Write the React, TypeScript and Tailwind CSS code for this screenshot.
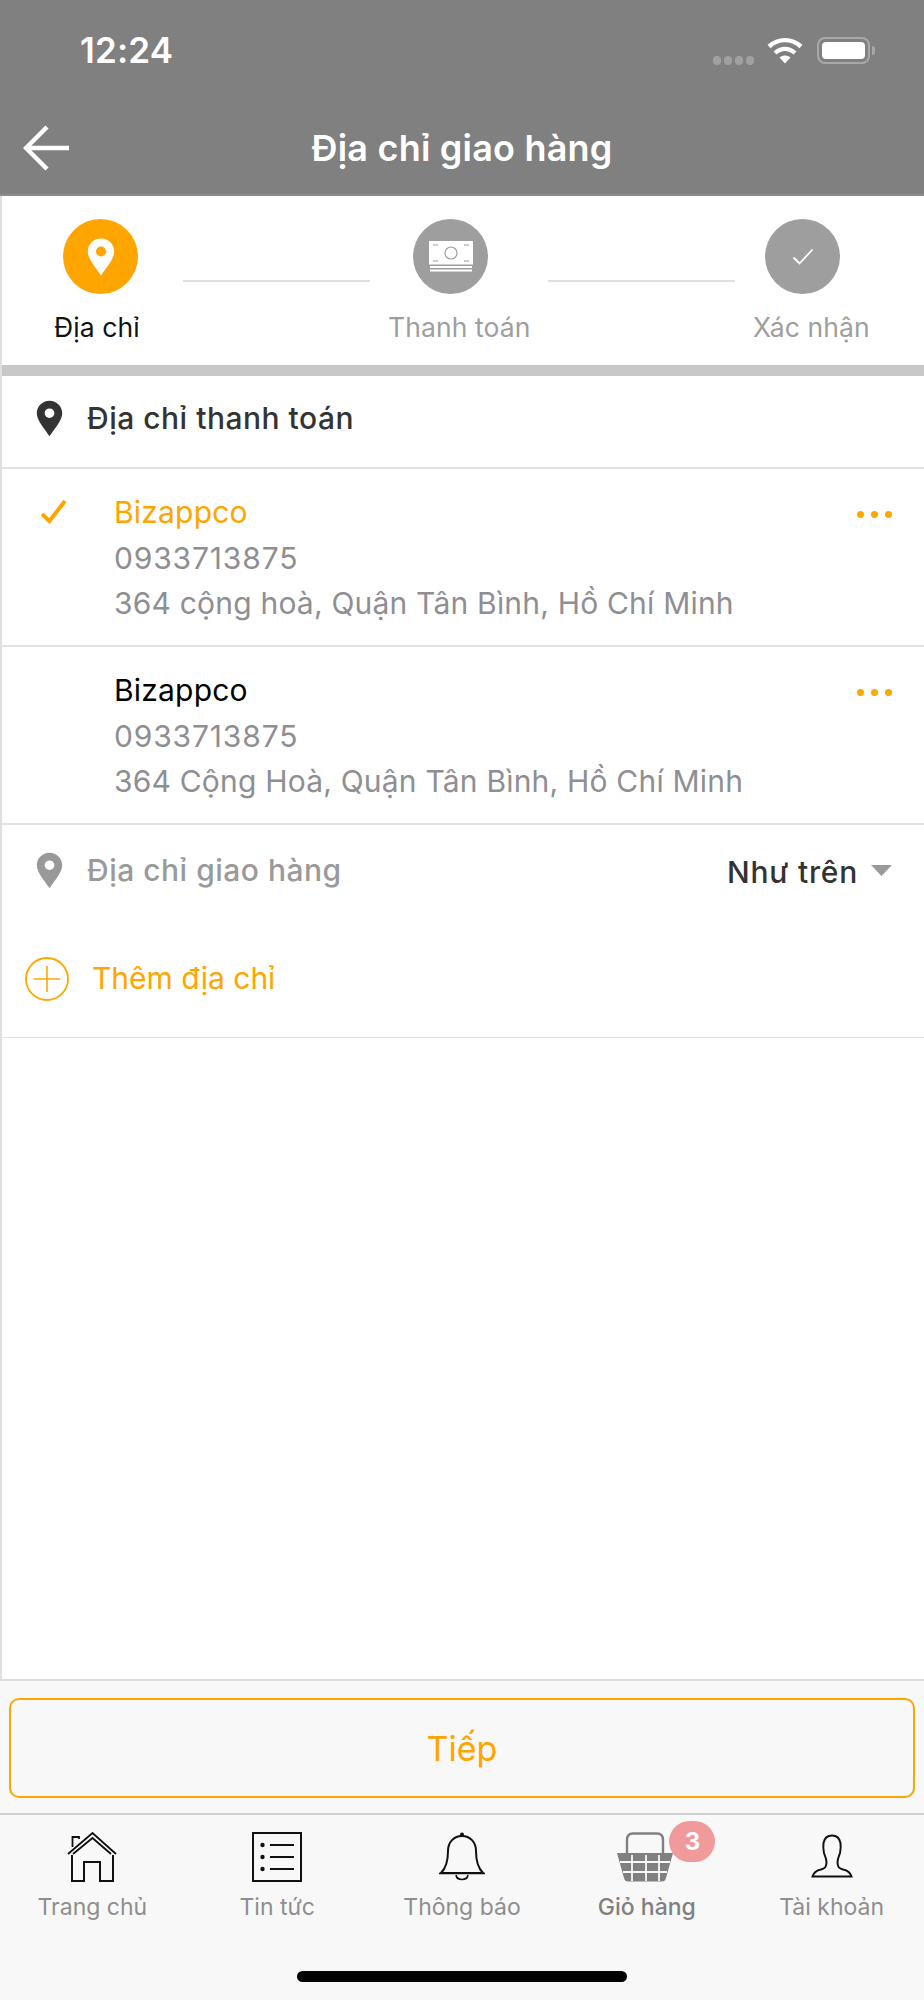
const font = { fontFamily: '"Inter", "Liberation Sans", sans-serif' };

function Pin({ fill, hole, className }: { fill: string; hole: string; className: string }) {
  return (
    <svg viewBox="0 0 28 38" className={className}>
      <path d="M14 0.5C6.5 0.5 0.8 6.3 0.8 13.6 0.8 21 9.5 30.5 14 37.5 18.5 30.5 27.2 21 27.2 13.6 27.2 6.3 21.5 0.5 14 0.5Z" fill={fill} />
      <circle cx="14" cy="13.5" r="5" fill={hole} />
    </svg>
  );
}

function Dots() {
  return (
    <div className="flex gap-[7px] mr-[32px] mt-[21px]">
      <span className="w-[7px] h-[7px] rounded-full bg-[#ffa500]" />
      <span className="w-[7px] h-[7px] rounded-full bg-[#ffa500]" />
      <span className="w-[7px] h-[7px] rounded-full bg-[#ffa500]" />
    </div>
  );
}

function Address({ name, nameColor, address, checked }: { name: string; nameColor: string; address: string; checked?: boolean }) {
  return (
    <div className="flex items-start h-[178px] shrink-0 pt-[21px] border-b-2 border-[#e2e2e2]">
      <div className="w-[112px] shrink-0 pl-[38px] pt-[9px]">
        {checked && (
          <svg viewBox="0 0 28 26" className="w-[28px] h-[26px]">
            <path d="M2 15 L9.5 22 L25 2" fill="none" stroke="#ffa500" strokeWidth="4" />
          </svg>
        )}
      </div>
      <div className="flex-1 text-[30px] leading-[44px] tracking-[0.2px]">
        <div className={`${nameColor} h-[46px]`}>{name}</div>
        <div className="text-[#8e8e93] h-[45px] tracking-[0.85px]">0933713875</div>
        <div className="text-[#8e8e93] h-[44px]">{address}</div>
      </div>
      <Dots />
    </div>
  );
}

function Tab({ label, children, strong }: { label: string; children: React.ReactNode; strong?: boolean }) {
  return (
    <div className="flex-1 flex flex-col items-center relative">
      <div className="h-[50px] flex items-center justify-center">{children}</div>
      <div className={`mt-[11px] text-[23px] leading-[28px] ${strong ? 'text-[#808080] font-medium' : 'text-[#8e8e8e]'}`}>{label}</div>
    </div>
  );
}

export default function App() {
  return (
    <div style={font} className="w-[924px] h-[2000px] flex flex-col bg-white overflow-hidden">
      <header className="h-[196px] shrink-0 bg-[#808080] border-b-2 border-[#8c8c8c] flex flex-col text-white">
        <div className="flex items-center h-[50px] mt-[25px] pl-[80px] pr-[49px]">
          <div className="text-[35px] font-semibold leading-[50px] tracking-[0.2px]">12:24</div>
          <div className="flex gap-[3px] ml-auto mt-[20px]">
            <span className="w-[8px] h-[9px] rounded-full bg-[#a0a0a0]" />
            <span className="w-[8px] h-[9px] rounded-full bg-[#a0a0a0]" />
            <span className="w-[8px] h-[9px] rounded-full bg-[#a0a0a0]" />
            <span className="w-[8px] h-[9px] rounded-full bg-[#a0a0a0]" />
          </div>
          <svg viewBox="0 0 36 27" className="w-[36px] h-[27px] ml-[13px]">
            <path d="M2 9.5C11.5 1 24.5 1 34 9.5" fill="none" stroke="#fff" strokeWidth="4.4" />
            <path d="M8 16C14 10.5 22 10.5 28 16" fill="none" stroke="#fff" strokeWidth="4.4" />
            <path d="M12.5 20.5C15.5 17.8 20.5 17.8 23.5 20.5L18 26.5Z" fill="#fff" />
          </svg>
          <div className="ml-[14px] w-[53px] h-[27px] rounded-[8px] border-[2px] border-[#a8a8a8] p-[3px]">
            <div className="w-full h-full bg-white rounded-[4px]" />
          </div>
          <div className="w-[3px] h-[9px] bg-[#a8a8a8] rounded-r-full ml-[2px]" />
        </div>
        <div className="relative flex items-center justify-center h-[60px] mt-[43px]">
          <svg viewBox="0 0 48 46" className="absolute left-[23px] top-[7px] w-[48px] h-[46px]">
            <path d="M46 23H3M24 2L3 23L24 44" fill="none" stroke="#fff" strokeWidth="4.4" />
          </svg>
          <h1 className="text-[36px] font-semibold tracking-[0.2px]">Địa chỉ giao hàng</h1>
        </div>
      </header>

      <main className="flex-1 border-l-2 border-[#dfdfdf] flex flex-col min-h-0">
        <div className="h-[169px] shrink-0 pt-[23px]">
          <div className="flex items-start pl-[61px]">
            <div className="w-[75px] h-[75px] rounded-full bg-[#ffa500] flex items-center justify-center">
              <Pin fill="#fff" hole="#ffa500" className="w-[28px] h-[40px]" />
            </div>
            <div className="w-[187px] h-[2px] bg-[#e0e0e0] mt-[61px] ml-[45px]" />
            <div className="ml-[43px] w-[75px] h-[75px] rounded-full bg-[#9e9e9e] flex items-center justify-center">
              <svg viewBox="0 0 44 32" className="w-[44px] h-[32px]">
                <rect x="0" y="0" width="44" height="23.5" fill="#fff" />
                <circle cx="22" cy="12" r="6" fill="none" stroke="#9e9e9e" strokeWidth="1.2" />
                <path d="M4 4H9M35 4H40M4 20H9M35 20H40" stroke="#9e9e9e" strokeWidth="1.2" />
                <rect x="1" y="25" width="42" height="2" fill="#fff" />
                <rect x="1" y="28.5" width="42" height="2" fill="#fff" />
              </svg>
            </div>
            <div className="w-[187px] h-[2px] bg-[#e0e0e0] mt-[61px] ml-[60px]" />
            <div className="ml-[30px] w-[75px] h-[75px] rounded-full bg-[#9e9e9e] flex items-center justify-center">
              <svg viewBox="0 0 22 18" className="w-[22px] h-[18px]">
                <path d="M1.5 9.5L7.5 15.5L20.5 1.5" fill="none" stroke="#fff" strokeWidth="1.8" />
              </svg>
            </div>
          </div>
          <div className="h-[30px] mt-[18px] text-[26.5px] leading-[30px] tracking-[0.1px]">
            <div className="flex">
              <span className="ml-[52px] w-[334px] text-[#111]">Địa chỉ</span>
              <span className="w-[365px] text-[#9e9e9e]">Thanh toán</span>
              <span className="text-[#9e9e9e]">Xác nhận</span>
            </div>
          </div>
        </div>
        <div className="h-[11px] shrink-0 bg-[#c8c8c8]" />
        <div className="h-[93px] shrink-0 flex items-center border-b-2 border-[#e2e2e2] pl-[34px] pb-[6px]">
          <Pin fill="#333" hole="#fff" className="w-[27px] h-[37px]" />
          <span className="ml-[24px] text-[30px] font-medium text-[#333] tracking-[0.5px]">Địa chỉ thanh toán</span>
        </div>
        <Address name="Bizappco" nameColor="text-[#ffa500]" address="364 cộng hoà, Quận Tân Bình, Hồ Chí Minh" checked />
        <Address name="Bizappco" nameColor="text-black" address="364 Cộng Hoà, Quận Tân Bình, Hồ Chí Minh" />
        <div className="h-[90px] shrink-0 flex items-center pl-[34px] pr-[32px]">
          <Pin fill="#999" hole="#fff" className="w-[27px] h-[37px]" />
          <span className="ml-[24px] text-[30px] font-medium text-[#9a9a9a] tracking-[0.5px] mt-[1px]">Địa chỉ giao hàng</span>
          <span className="ml-auto text-[30px] font-medium text-[#333] tracking-[0.8px] mt-[4px]">Như trên</span>
          <svg viewBox="0 0 21 11" className="w-[21px] h-[11px] ml-[13px]"><path d="M0 0H21L10.500 11Z" fill="#999" /></svg>
        </div>
        <div className="flex-1 min-h-0">
          <div className="h-[123px] border-b border-[#e2e2e2] flex items-center pl-[23px] pt-[5px]">
            <svg viewBox="0 0 44 44" className="w-[44px] h-[44px]">
              <circle cx="22" cy="22" r="21" fill="none" stroke="#ffa500" strokeWidth="1.8" />
              <path d="M22 9V35M9 22H35" stroke="#ffa500" strokeWidth="1.6" />
            </svg>
            <span className="ml-[23px] text-[30px] text-[#ffa500]">Thêm địa chỉ</span>
          </div>
        </div>
      </main>

      <footer className="shrink-0 bg-[#f8f8f8] border-t-2 border-[#dcdcdc]">
        <div className="h-[134px] px-[9px] pt-[17px] border-b-2 border-[#cfcfcf]">
          <button className="w-full h-[100px] rounded-[10px] border-[2.5px] border-[#ffa500] text-[#ffa500] text-[34px]">Tiếp</button>
        </div>
        <div className="h-[185px] pt-[17px] flex flex-col">
          <div className="flex">
            <Tab label="Trang chủ">
              <svg viewBox="0 0 50 50" className="w-[50px] h-[50px]">
                <path d="M5 23V49H17V30H33V49H46V23" fill="none" stroke="#111" strokeWidth="2" />
                <path d="M1 22L25.500 1 49 22M6 22L25.500 6 44 22" fill="none" stroke="#111" strokeWidth="1.8" />
                <path d="M5.500 15V5H12V7" fill="none" stroke="#111" strokeWidth="1.8" />
              </svg>
            </Tab>
            <Tab label="Tin tức">
              <svg viewBox="0 0 50 50" className="w-[50px] h-[50px]">
                <rect x="1" y="1" width="48" height="48" fill="none" stroke="#111" strokeWidth="2" />
                <path d="M18 13H42M18 25H42M18 37H42" stroke="#111" strokeWidth="2" />
                <circle cx="10.500" cy="13" r="2.200" fill="#111" />
                <circle cx="10.500" cy="25" r="2.200" fill="#111" />
                <circle cx="10.500" cy="37" r="2.200" fill="#111" />
              </svg>
            </Tab>
            <Tab label="Thông báo">
              <svg viewBox="0 0 46 50" className="w-[46px] h-[50px]">
                <circle cx="23" cy="2.500" r="2" fill="#111" />
                <path d="M2 41C7 36 9 30 9 19 9 10 15 4 23 4 31 4 37 10 37 19 37 30 39 36 44 41Z" fill="none" stroke="#111" strokeWidth="2" />
                <path d="M0 41.500H46" stroke="#111" strokeWidth="1.500" />
                <path d="M17 43C18 49 28 49 29 43" fill="none" stroke="#111" strokeWidth="1.600" />
              </svg>
            </Tab>
            <Tab label="Giỏ hàng" strong>
              <svg viewBox="0 0 58 50" className="w-[58px] h-[50px] mr-[4px]">
                <path d="M11 21V8C11 4 13 1.500 17 1.500H41C45 1.500 47 4 47 8V21" fill="none" stroke="#808080" strokeWidth="2.400" />
                <path d="M1 21H57L50 46C49.500 48.500 48 49.500 46 49.500H12C10 49.500 8.500 48.500 8 46Z" fill="#808080" />
                <path d="M4 30H54M7 40H51M16 23V49M30 23V49M43 23V49" stroke="#f8f8f8" strokeWidth="1.800" />
              </svg>
              <div className="absolute left-[115px] top-[-11px] w-[46px] h-[41px] rounded-full bg-[#f09a9c] flex items-center justify-center text-white text-[24px] font-bold">3</div>
            </Tab>
            <Tab label="Tài khoản">
              <svg viewBox="0 0 42 44" className="w-[42px] h-[44px] mt-[-2px]">
                <path d="M1.500 42.500C2.500 39 5 36.500 10 35.500 14 34.500 15.500 33 15.500 28 15.500 25 14 22 13 19 12 14 12 12 12.500 9 13.500 4 17 1.500 21 1.500 25 1.500 28.500 4 29.500 9 30 12 30 14 29 19 28 22 26.500 25 26.500 28 26.500 33 28 34.500 32 35.500 37 36.500 39.500 39 40.500 42.500Z" fill="none" stroke="#111" strokeWidth="2" />
              </svg>
            </Tab>
          </div>
          <div className="mt-auto mb-[18px] mx-auto w-[330px] h-[11px] rounded-full bg-black" />
        </div>
      </footer>
    </div>
  );
}
